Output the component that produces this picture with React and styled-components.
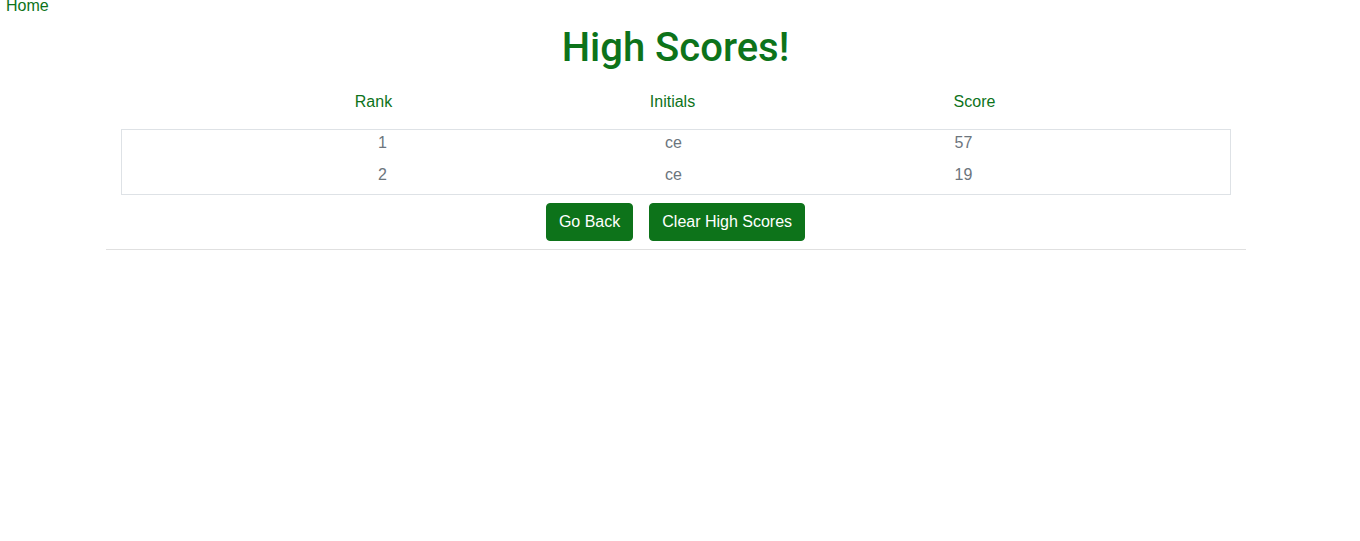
import React from 'react';
import styled, { createGlobalStyle } from 'styled-components';

const GREEN = '#0d731a';
const GREY = '#6c757d';
const BORDER = '#dee2e6';

const GlobalStyle = createGlobalStyle`
    body {
        margin: 0;
        font-family: "Liberation Sans", Arial, sans-serif;
        font-size: 16px;
        line-height: 1.5;
        color: #212529;
        background: #fff;
    }
`;

const Page = styled.div`
    width: 1351px;
`;

const Nav = styled.nav`
    height: 11px;
    line-height: 11px;
    padding-left: 6px;
`;

const NavLink = styled.a`
    color: ${GREEN};
    text-decoration: none;
`;

const Container = styled.div`
    width: 1140px;
    margin: 0 auto;
`;

const Title = styled.h1`
    margin: 13px 0 0;
    font-family: Roboto, "Liberation Sans", sans-serif;
    font-size: 40px;
    font-weight: 500;
    line-height: 1.2;
    text-align: center;
    color: ${GREEN};
`;

const HeaderRow = styled.div`
    display: grid;
    grid-template-columns: 506px 92px 1fr;
    margin: 18px 15px 0;
    text-align: center;
    color: ${GREEN};
`;

const ScoreBox = styled.div`
    margin: 15px 15px 0;
    border: 1px solid ${BORDER};
`;

const ScoreRow = styled.div`
    display: grid;
    grid-template-columns: 522px 60px 520px;
    padding-top: 1px;
    margin-bottom: 7px;
    text-align: center;
    color: ${GREY};
`;

const Actions = styled.div`
    display: flex;
    justify-content: center;
    gap: 16px;
    margin-top: 8px;
`;

const Button = styled.button`
    font-family: inherit;
    font-size: 16px;
    line-height: 24px;
    padding: 6px 12px;
    border: 1px solid ${GREEN};
    border-radius: 4px;
    background: ${GREEN};
    color: #fff;
    cursor: pointer;
`;

const Rule = styled.hr`
    margin: 8px 0 0;
    border: 0;
    border-top: 1px solid rgba(0, 0, 0, 0.12);
`;

const scores = [
    { rank: 1, initials: 'ce', score: 57 },
    { rank: 2, initials: 'ce', score: 19 },
];

const App = () => (
    <Page>
        <GlobalStyle />
        <Nav>
            <NavLink href="#">Home</NavLink>
        </Nav>
        <Container>
            <Title>High Scores!</Title>
            <HeaderRow>
                <span>Rank</span>
                <span>Initials</span>
                <span>Score</span>
            </HeaderRow>
            <ScoreBox>
                {scores.map((s) => (
                    <ScoreRow key={s.rank}>
                        <span>{s.rank}</span>
                        <span>{s.initials}</span>
                        <span>{s.score}</span>
                    </ScoreRow>
                ))}
            </ScoreBox>
            <Actions>
                <Button>Go Back</Button>
                <Button>Clear High Scores</Button>
            </Actions>
            <Rule />
        </Container>
    </Page>
);

export default App;
